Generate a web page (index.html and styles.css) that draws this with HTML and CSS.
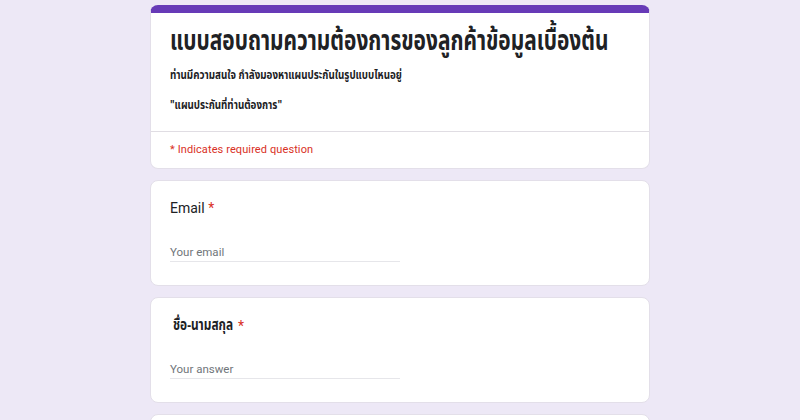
FILE: index.html
```html
<!DOCTYPE html>
<html lang="th">
<head>
<meta charset="utf-8">
<link rel="stylesheet" href="styles.css">
</head>
<body>
<div class="page">
  <div class="card head">
    <div class="head-body">
      <h1 class="title"><span class="cond">แบบสอบถามความต้องการของลูกค้าข้อมูลเบื้องต้น</span></h1>
      <p class="desc"><span class="cond-s">ท่านมีความสนใจ กำลังมองหาแผนประกันในรูปแบบไหนอยู่</span></p>
      <p class="desc"><span class="cond-s">"แผนประกันที่ท่านต้องการ"</span></p>
    </div>
    <div class="req-note">* Indicates required question</div>
  </div>
  <div class="card q">
    <div class="q-label">Email <span class="star">*</span></div>
    <div class="field">Your email</div>
  </div>
  <div class="card q">
    <div class="q-label thai"><span class="cond-q">ชื่อ-นามสกุล</span><span class="star star-gap">*</span></div>
    <div class="field">Your answer</div>
  </div>
  <div class="card q"></div>
</div>
</body>
</html>
```
FILE: styles.css
```css
html, body {
  margin: 0;
  padding: 0;
  background: #ede8f6;
  font-family: Roboto, "Noto Sans Thai", "Noto Sans", sans-serif;
  overflow: hidden;
}
.page {
  width: 500px;
  height: 420px;
  margin: 0 auto;
  padding-top: 5px;
  box-sizing: border-box;
  display: flex;
  flex-direction: column;
  gap: 11px;
}
.card {
  flex: none;
  background: #fff;
  border-radius: 8px;
  border: 1px solid #e3dfe9;
  box-sizing: border-box;
}
.head {
  border-top: 8px solid #673ab7;
  height: 164px;
}
.head-body {
  padding: 8px 19px 0;
  height: 119px;
  border-bottom: 1px solid #e0dde3;
  box-sizing: border-box;
}
.title {
  margin: 0;
  font-family: "Noto Sans Thai", "Noto Sans", sans-serif;
  font-weight: 700;
  font-size: 29px;
  line-height: 40px;
  color: #202124;
  white-space: nowrap;
}
.cond {
  display: inline-block;
  transform: scaleX(0.72);
  transform-origin: 0 50%;
}
.desc {
  margin: 8px 0 0;
  font-family: "Noto Sans Thai", "Noto Sans", sans-serif;
  font-weight: 700;
  font-size: 11.5px;
  line-height: 14px;
  color: #202124;
  white-space: nowrap;
}
.cond-s {
  display: inline-block;
  transform: scaleX(0.85);
  transform-origin: 0 50%;
}
.desc + .desc {
  margin-top: 16px;
}
.req-note {
  padding: 11px 19px 0;
  font-size: 11px;
  line-height: 14px;
  letter-spacing: 0.1px;
  color: #d93025;
}
.q {
  height: 106px;
  padding: 18px 19px 0;
}
.q-label {
  font-size: 14px;
  line-height: 18px;
  color: #202124;
}
.q-label.thai {
  font-family: "Noto Sans Thai", "Noto Sans", sans-serif;
  font-weight: 700;
  font-size: 15px;
  line-height: 20px;
  padding-left: 3px;
  display: flex;
  align-items: center;
}
.cond-q {
  display: inline-block;
  width: 58px;
  white-space: nowrap;
  transform: scaleX(0.79);
  transform-origin: 0 50%;
}
.star {
  color: #d93025;
  font-family: Roboto, sans-serif;
  font-weight: 400;
  font-size: 14px;
}
.star-gap {
  margin-left: 7px;
}
.field {
  margin-top: 27px;
  width: 230px;
  padding-bottom: 1px;
  border-bottom: 1px solid #e6e6ea;
  font-size: 11.5px;
  line-height: 16px;
  color: #70757a;
}
.thai + .field {
  margin-top: 25px;
}
```
